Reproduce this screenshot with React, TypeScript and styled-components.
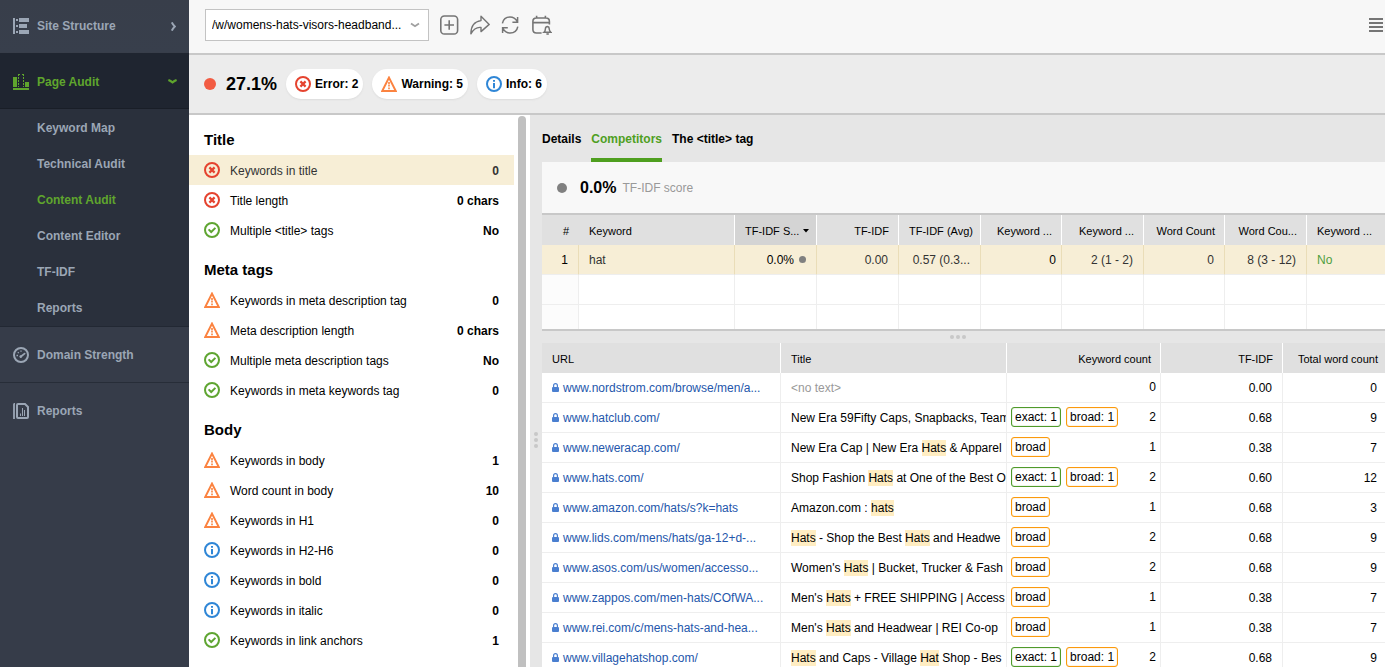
import React from "react";
import styled, { createGlobalStyle } from "styled-components";

const GlobalStyle = createGlobalStyle`
  *, *::before, *::after { box-sizing: border-box; }
  body { margin: 0; background: #fff; }
  body, button, select {
    font-family: "Liberation Sans", Arial, sans-serif;
    font-size: 12px;
    color: #000;
  }
  button { border: 0; padding: 0; background: none; cursor: pointer; }
  ul { list-style: none; margin: 0; padding: 0; }
  h2 { margin: 0; }
  a { color: inherit; text-decoration: none; }
  svg { display: block; flex: none; }
`;

/* ---------- shell ---------- */

const Shell = styled.div`
  display: flex;
  height: 100vh;
  overflow: hidden;
`;

const Main = styled.main`
  flex: 1;
  min-width: 0;
  display: flex;
  flex-direction: column;
`;

const Workspace = styled.div`
  flex: 1;
  min-height: 0;
  display: flex;
`;

/* ---------- sidebar ---------- */

const Sidebar = styled.nav`
  flex: none;
  width: 189px;
  background: #363c49;
  color: #9ba6b5;
  font-weight: bold;
`;

const NavItem = styled.a<{ $active?: boolean; $divider?: boolean }>`
  display: flex;
  align-items: center;
  gap: 8px;
  height: 56px;
  padding: ${(p) => (p.$active ? 2 : 0)}px 12px 0 13px;
  color: ${(p) => (p.$active ? "#5fa52d" : "inherit")};
  background: ${(p) => (p.$active ? "#1f2530" : "transparent")};
  border-bottom: 1px solid ${(p) => (p.$active ? "#191e27" : p.$divider ? "#272d38" : "transparent")};
`;

const FirstNavItem = styled(NavItem)`
  height: 53px;
  padding-right: 13px;
  background: linear-gradient(#383e4a, #383f4c);
`;

const NavLabel = styled.span`
  flex: 1;
`;

const SubMenu = styled.ul`
  padding: 1px 0 0;
  background: #2a303c;
  border-bottom: 1px solid #222833;
`;

const SubItem = styled.a<{ $active?: boolean }>`
  display: flex;
  align-items: center;
  height: 36px;
  padding-left: 37px;
  color: ${(p) => (p.$active ? "#5fa52d" : "inherit")};
`;

/* ---------- top bars ---------- */

const Toolbar = styled.header`
  display: flex;
  align-items: center;
  height: 55px;
  padding: 0 2px 4px 16px;
  background: #f7f7f7;
  border-bottom: 2px solid #c8c8c8;
`;

const SelectBox = styled.label`
  display: grid;
  align-items: center;
  width: 224px;
  margin-right: 10px;
  & > * { grid-area: 1 / 1; }
  & > svg { justify-self: end; margin-right: 9px; pointer-events: none; }
`;

const PageSelect = styled.select`
  appearance: none;
  width: 100%;
  height: 32px;
  padding: 0 20px 0 6px;
  border: 1px solid #c3c3c3;
  border-radius: 0;
  background: #fff;
`;

const ToolGroup = styled.div`
  display: flex;
  gap: 11px;
`;

const ToolButton = styled.button`
  display: block;
  color: #757575;
`;

const MenuButton = styled(ToolButton)`
  margin-left: auto;
`;

const ScoreBar = styled.section`
  display: flex;
  align-items: center;
  height: 60px;
  padding: 0 15px;
  background: #ececec;
  border-bottom: 2px solid #c8c8c8;
`;

const Dot = styled.span<{ $size: number; $color: string }>`
  display: inline-block;
  flex: none;
  width: ${(p) => p.$size}px;
  height: ${(p) => p.$size}px;
  border-radius: 50%;
  background: ${(p) => p.$color};
`;

const TotalScore = styled.strong`
  margin: 0 9px 0 10px;
  font-size: 18px;
`;

const PillGroup = styled.div`
  display: flex;
  gap: 9px;
`;

const Pill = styled.button`
  display: flex;
  align-items: center;
  gap: 4px;
  height: 30px;
  padding: 0 5px 0 9px;
  border-radius: 15px;
  background: #fff;
  box-shadow: 0 1px 2px #dcdcdc;
  font-weight: bold;
`;

/* ---------- factor list ---------- */

const FactorPane = styled.aside`
  flex: none;
  display: flex;
  width: 341px;
  background: #fff;
`;

const FactorList = styled.div`
  flex: 1;
`;

const ScrollThumb = styled.div`
  width: 8px;
  margin: 1px 4px 0;
  border-radius: 4px 4px 0 0;
  background: #c0c0c0;
`;

const GroupTitle = styled.h2`
  height: 40px;
  padding: 10px 15px 0;
  font-size: 15px;
  line-height: 30px;
`;

const FactorRow = styled.button<{ $selected?: boolean }>`
  display: flex;
  align-items: center;
  gap: 10px;
  width: 100%;
  height: 30px;
  padding: 0 15px;
  text-align: left;
  color: ${(p) => (p.$selected ? "#333" : "#000")};
  background: ${(p) => (p.$selected ? "#f7eed6" : "transparent")};
`;

const FactorName = styled.span`
  flex: 1;
  padding-top: 2px;
`;

const FactorValue = styled.strong`
  padding-top: 2px;
`;

/* ---------- detail pane ---------- */

const Detail = styled.section`
  flex: 1;
  min-width: 0;
  display: flex;
  background: #e6e6e6;
`;

const VSplitter = styled.div`
  flex: none;
  display: flex;
  flex-direction: column;
  align-items: center;
  gap: 2px;
  width: 12px;
  padding-top: 317px;
`;

const HSplitter = styled.div`
  display: flex;
  align-items: center;
  justify-content: center;
  gap: 2px;
  height: 12px;
  padding-right: 12px;
`;

const DetailBody = styled.div`
  flex: 1;
  min-width: 0;
`;

const Tabs = styled.div`
  display: flex;
  gap: 10px;
  height: 47px;
`;

const Tab = styled.button<{ $active?: boolean }>`
  padding-top: 4px;
  font-weight: bold;
  color: ${(p) => (p.$active ? "#4f9f1f" : "#000")};
  border-bottom: 4px solid ${(p) => (p.$active ? "#4f9f1f" : "transparent")};
`;

const ScoreHead = styled.div`
  display: flex;
  align-items: center;
  height: 53px;
  padding: 0 15px;
  background: #f8f8f8;
  border-bottom: 2px solid #c8c8c8;
`;

const TfScore = styled.strong`
  margin: 0 6px 0 13px;
  font-size: 16px;
`;

const Muted = styled.span`
  color: #999;
`;

const Grid = styled.table`
  width: 100%;
  table-layout: fixed;
  border-collapse: separate;
  border-spacing: 0;
  background: #fff;
`;

const KeywordGrid = styled(Grid)`
  border-bottom: 2px solid #c8c8c8;
`;

type CellProps = { $align?: "left" | "right"; $pad?: number; $plain?: boolean; $sorted?: boolean };

const Th = styled.th<CellProps>`
  height: 30px;
  padding: 2px ${(p) => p.$pad ?? 9}px 0 10px;
  overflow: hidden;
  white-space: nowrap;
  font-size: 11px;
  font-weight: normal;
  text-align: ${(p) => p.$align ?? "right"};
  background: ${(p) => (p.$sorted ? "#d4d4d4" : "#e0e0e0")};
  border-right: 1px solid ${(p) => (p.$plain ? "#e0e0e0" : "#fff")};
  &:last-child { border-right: 0; }
`;

const Td = styled.td<CellProps>`
  height: 30px;
  padding: 0 ${(p) => p.$pad ?? 10}px 0 10px;
  overflow: hidden;
  white-space: nowrap;
  text-align: ${(p) => p.$align ?? "right"};
  border-right: 1px solid #eee;
  border-bottom: 1px solid #eee;
  &:last-child { border-right: 0; }
`;

const CountTd = styled(Td)`
  padding: 0 4px 1px;
`;

const KeywordRow = styled.tr<{ $selected?: boolean; $last?: boolean }>`
  & > td {
    height: ${(p) => (p.$last ? 24 : 30)}px;
    color: ${(p) => (p.$selected ? "#333" : "#000")};
    background: ${(p) => (p.$selected ? "#f7eed6" : "#fff")};
    border-right-color: ${(p) => (p.$selected ? "#eaddb8" : "#eee")};
    border-bottom-width: ${(p) => (p.$last ? 0 : 1)}px;
  }
  & > td:first-child { background: ${(p) => (p.$selected ? "#f7eed6" : "#fcfcfc")}; }
`;

const SortCell = styled.span`
  display: inline-flex;
  align-items: center;
  gap: 4px;
`;

const ValueCell = styled(SortCell)`
  gap: 5px;
`;

const Strong = styled.span`
  color: #000;
`;

const Positive = styled.span`
  color: #4f9f3f;
`;

const SiteLink = styled.a`
  display: flex;
  align-items: center;
  gap: 4px;
  color: #2456ab;
`;

const Mark = styled.mark`
  padding: 1px 0;
  color: inherit;
  background: #ffedc2;
`;

const CountCell = styled.div`
  display: flex;
  align-items: center;
  gap: 5px;
`;

const Tag = styled.span<{ $kind: "exact" | "broad" }>`
  height: 20px;
  padding: 0 3px;
  line-height: 18px;
  border: 1px solid ${(p) => (p.$kind === "exact" ? "#4f9a2a" : "#fb9a0c")};
  border-radius: 3px;
  box-shadow: inset 0 0 1px ${(p) => (p.$kind === "exact" ? "#4f9a2a" : "#fb9a0c")};
`;

const Count = styled.span`
  margin-left: auto;
`;

/* ---------- icons ---------- */

const StructureIcon = () => (
  <svg width="16" height="16" fill="currentColor">
    <path d="M0 0h2v16H0zM3 1h2v2H3zM3 7h2v2H3zM3 13h2v2H3zM6 0h10v4H6zM6 6h8v4H6zM6 12h10v4H6z" />
  </svg>
);

const AuditIcon = () => (
  <svg width="16" height="16" fill="currentColor">
    <path d="M0 3h4v10H0zM12 8h4v5h-4zM0 14h16v2H0z" />
    <path d="M5 0h2v1H6v1H5zM9 0h2v2h-1V1H9zM5 3h1v2H5zM5 6h1v2H5zM5 9h1v2H5zM5 12h1v1H5zM10 3h1v2h-1zM10 6h1v2h-1zM10 9h1v2h-1zM10 12h1v1h-1z" />
  </svg>
);

const GaugeIcon = () => (
  <svg width="16" height="16" fill="none" stroke="currentColor">
    <circle cx="8" cy="8" r="7" strokeWidth="2" />
    <path d="M7.6 9.8L11.6 6.6" strokeWidth="1.8" strokeLinecap="round" />
    <circle cx="7.8" cy="9.6" r="1.3" fill="currentColor" stroke="none" />
    <path d="M3.5 8.5h1.5M4.8 5.2l.9.9M8 3.4v1.4" strokeWidth="1.3" />
  </svg>
);

const ReportIcon = () => (
  <svg width="16" height="16" fill="none" stroke="currentColor">
    <path d="M1 16V1.5Q1 .8 2 .8" strokeWidth="1.8" />
    <path d="M5 1h7l3 3v10q0 1-1 1H5q-1 0-1-1V2q0-1 1-1z" strokeWidth="2" />
    <path d="M7.5 13v-2.5M9.5 13V5M11.5 13V7" />
  </svg>
);

const ChevronRight = () => (
  <svg width="5" height="9" fill="none" stroke="currentColor" strokeWidth="2">
    <path d="M.8.4Q2 2.8 3.8 4.5Q2 6.2.8 8.6" />
  </svg>
);

const ChevronDown = () => (
  <svg width="9" height="5" fill="none" stroke="currentColor" strokeWidth="2.2">
    <path d="M.4 1Q2.6 1.8 4.5 3.4Q6.4 1.8 8.6 1" />
  </svg>
);

const SelectChevron = () => (
  <svg width="10" height="6" fill="none" stroke="#a0a0a0" strokeWidth="1.8">
    <path d="M1 1.4L5 4.2L9 1.4" />
  </svg>
);

const line = { width: 20, height: 20, fill: "none", stroke: "currentColor", strokeWidth: 1.6 } as const;

const AddIcon = () => (
  <svg {...line}>
    <rect x="1.8" y="1" width="16.8" height="18" rx="3.6" />
    <path d="M10.2 5.2v9.6M5.4 10h9.6" />
  </svg>
);

const ShareIcon = () => (
  <svg {...line} strokeWidth="1.4" strokeLinejoin="round">
    <path d="M11 1.2L19.2 9.4L11 16.6V12.4C7.4 12 3.6 13.8.9 18.8C.9 11.2 4.8 6.4 11 5.6z" />
  </svg>
);

const RefreshIcon = () => (
  <svg {...line} strokeWidth="1.5">
    <path d="M1.4 8.4C2.2 4.4 5.4 2 9 2C12.2 2 14.6 3.6 16.2 6.4M16.6 2V7.2H11.4" />
    <path d="M16.8 11.6C16 15.6 12.8 18 9.2 18C6 18 3.6 16.4 2 13.6M1.6 18V12.8H6.8" />
  </svg>
);

const ScheduleIcon = () => (
  <svg {...line} strokeWidth="1.6">
    <path d="M9.6 18H4.4Q.9 18 .9 14.6V6.4Q.9 3 4.4 3H14Q17.4 3 17.4 6.4V9.4M.9 7.6H17.4M4.6 .8V3.2M13.4 .8V3.2" />
    <path d="M12 17.2Q13.4 16 13.4 13.8Q13.6 11.6 15.4 11.6Q17.4 11.8 17.2 14Q17.4 16 18.8 17.2z" strokeWidth="1.5" />
    <path d="M14.4 19h2.4" strokeWidth="1.6" />
  </svg>
);

const MenuIcon = () => (
  <svg width="14" height="14" fill="currentColor">
    <path d="M0 0h14v2H0zM0 4h14v2H0zM0 8h14v2H0zM0 12h14v2H0z" />
  </svg>
);

type Status = "error" | "warning" | "info" | "ok";

const StatusIcon = ({ status }: { status: Status }) => {
  if (status === "warning")
    return (
      <svg width="16" height="16" fill="none" stroke="#fb8340">
        <path d="M8 1.6L14.8 15H1.2z" strokeWidth="2" />
        <path d="M8 6v2M8 8.6v2M8 11.4v1.8" strokeWidth="1.6" />
      </svg>
    );
  const color = { error: "#e5432f", info: "#2f86d6", ok: "#5fa532" }[status];
  return (
    <svg width="16" height="16" fill="none" stroke={color}>
      <circle cx="8" cy="8" r="7" strokeWidth="2" />
      {status === "error" && <path d="M5.4 5.4l5.2 5.2M10.6 5.4l-5.2 5.2" strokeWidth="2.2" />}
      {status === "info" && <path d="M8 4v1.8M8 7v5.2" strokeWidth="2" />}
      {status === "ok" && <path d="M4.6 7.4L7.2 10L11.4 5.9" strokeWidth="2" />}
    </svg>
  );
};

const SortArrow = () => (
  <svg width="6" height="4">
    <path d="M0 0h6L3 3.6z" />
  </svg>
);

const LockIcon = () => (
  <svg width="7" height="10" fill="none" stroke="#4a7fd0">
    <path d="M1.6 5V2.6Q1.6 .7 3.5 .7T5.4 2.6V5" strokeWidth="1.2" />
    <rect x="0" y="4" width="7" height="5" rx="1" fill="#4a7fd0" stroke="none" />
  </svg>
);

/* ---------- data ---------- */

const subPages = ["Keyword Map", "Technical Audit", "Content Audit", "Content Editor", "TF-IDF", "Reports"];

const groups: { title: string; rows: [Status, string, string][] }[] = [
  {
    title: "Title",
    rows: [
      ["error", "Keywords in title", "0"],
      ["error", "Title length", "0 chars"],
      ["ok", "Multiple <title> tags", "No"],
    ],
  },
  {
    title: "Meta tags",
    rows: [
      ["warning", "Keywords in meta description tag", "0"],
      ["warning", "Meta description length", "0 chars"],
      ["ok", "Multiple meta description tags", "No"],
      ["ok", "Keywords in meta keywords tag", "0"],
    ],
  },
  {
    title: "Body",
    rows: [
      ["warning", "Keywords in body", "1"],
      ["warning", "Word count in body", "10"],
      ["warning", "Keywords in H1", "0"],
      ["info", "Keywords in H2-H6", "0"],
      ["info", "Keywords in bold", "0"],
      ["info", "Keywords in italic", "0"],
      ["ok", "Keywords in link anchors", "1"],
    ],
  },
];

const keywordCols = [37, 0, 82, 82, 82, 81, 82, 81, 82, 78];
const siteCols = [239, 0, 154, 122, 102];

type Site = { url: string; title: string; tags: string[]; count: number; tfidf: string; words: number };

const sites: Site[] = [
  { url: "www.nordstrom.com/browse/men/a...", title: "", tags: [], count: 0, tfidf: "0.00", words: 0 },
  { url: "www.hatclub.com/", title: "New Era 59Fifty Caps, Snapbacks, Team", tags: ["exact: 1", "broad: 1"], count: 2, tfidf: "0.68", words: 9 },
  { url: "www.neweracap.com/", title: "New Era Cap | New Era *Hats* & Apparel", tags: ["broad"], count: 1, tfidf: "0.38", words: 7 },
  { url: "www.hats.com/", title: "Shop Fashion *Hats* at One of the Best O", tags: ["exact: 1", "broad: 1"], count: 2, tfidf: "0.60", words: 12 },
  { url: "www.amazon.com/hats/s?k=hats", title: "Amazon.com : *hats*", tags: ["broad"], count: 1, tfidf: "0.68", words: 3 },
  { url: "www.lids.com/mens/hats/ga-12+d-...", title: "*Hats* - Shop the Best *Hats* and Headwe", tags: ["broad"], count: 2, tfidf: "0.68", words: 9 },
  { url: "www.asos.com/us/women/accesso...", title: "Women's *Hats* | Bucket, Trucker & Fash", tags: ["broad"], count: 2, tfidf: "0.68", words: 9 },
  { url: "www.zappos.com/men-hats/COfWA...", title: "Men's *Hats* + FREE SHIPPING | Access", tags: ["broad"], count: 1, tfidf: "0.38", words: 7 },
  { url: "www.rei.com/c/mens-hats-and-hea...", title: "Men's *Hats* and Headwear | REI Co-op", tags: ["broad"], count: 1, tfidf: "0.38", words: 7 },
  { url: "www.villagehatshop.com/", title: "*Hats* and Caps - Village *Hat* Shop - Bes", tags: ["exact: 1", "broad: 1"], count: 2, tfidf: "0.68", words: 9 },
];

const Highlighted = ({ text }: { text: string }) => (
  <>{text.split("*").map((part, i) => (i % 2 ? <Mark key={i}>{part}</Mark> : part))}</>
);

const Columns = ({ widths }: { widths: number[] }) => (
  <colgroup>
    {widths.map((w, i) => (
      <col key={i} width={w || undefined} />
    ))}
  </colgroup>
);

const Grip = () => (
  <>
    <Dot $size={4} $color="#c8c8c8" />
    <Dot $size={4} $color="#c8c8c8" />
    <Dot $size={4} $color="#c8c8c8" />
  </>
);

/* ---------- page ---------- */

export default function App() {
  return (
    <>
      <GlobalStyle />
      <Shell>
        <Sidebar>
          <FirstNavItem href="#structure">
            <StructureIcon />
            <NavLabel>Site Structure</NavLabel>
            <ChevronRight />
          </FirstNavItem>
          <NavItem href="#audit" $active>
            <AuditIcon />
            <NavLabel>Page Audit</NavLabel>
            <ChevronDown />
          </NavItem>
          <SubMenu>
            {subPages.map((name) => (
              <li key={name}>
                <SubItem href="#audit" $active={name === "Content Audit"}>{name}</SubItem>
              </li>
            ))}
          </SubMenu>
          <NavItem href="#domain" $divider>
            <GaugeIcon />
            <NavLabel>Domain Strength</NavLabel>
          </NavItem>
          <NavItem href="#reports">
            <ReportIcon />
            <NavLabel>Reports</NavLabel>
          </NavItem>
        </Sidebar>

        <Main>
          <Toolbar>
            <SelectBox>
              <PageSelect aria-label="Page">
                <option>/w/womens-hats-visors-headband...</option>
              </PageSelect>
              <SelectChevron />
            </SelectBox>
            <ToolGroup>
              <ToolButton aria-label="Add"><AddIcon /></ToolButton>
              <ToolButton aria-label="Share"><ShareIcon /></ToolButton>
              <ToolButton aria-label="Refresh"><RefreshIcon /></ToolButton>
              <ToolButton aria-label="Schedule"><ScheduleIcon /></ToolButton>
            </ToolGroup>
            <MenuButton aria-label="Menu"><MenuIcon /></MenuButton>
          </Toolbar>

          <ScoreBar>
            <Dot $size={12} $color="#f25c43" />
            <TotalScore>27.1%</TotalScore>
            <PillGroup>
              <Pill><StatusIcon status="error" />Error: 2</Pill>
              <Pill><StatusIcon status="warning" />Warning: 5</Pill>
              <Pill><StatusIcon status="info" />Info: 6</Pill>
            </PillGroup>
          </ScoreBar>

          <Workspace>
            <FactorPane>
              <FactorList>
                {groups.map((group, g) => (
                  <section key={group.title}>
                    <GroupTitle>{group.title}</GroupTitle>
                    <ul>
                      {group.rows.map(([status, name, value], r) => (
                        <li key={name}>
                          <FactorRow $selected={g === 0 && r === 0}>
                            <StatusIcon status={status} />
                            <FactorName>{name}</FactorName>
                            <FactorValue>{value}</FactorValue>
                          </FactorRow>
                        </li>
                      ))}
                    </ul>
                  </section>
                ))}
              </FactorList>
              <ScrollThumb />
            </FactorPane>

            <Detail>
              <VSplitter><Grip /></VSplitter>
              <DetailBody>
                <Tabs role="tablist">
                  <Tab role="tab">Details</Tab>
                  <Tab role="tab" aria-selected $active>Competitors</Tab>
                  <Tab role="tab">The &lt;title&gt; tag</Tab>
                </Tabs>
                <ScoreHead>
                  <Dot $size={10} $color="#808080" />
                  <TfScore>0.0%</TfScore>
                  <Muted>TF-IDF score</Muted>
                </ScoreHead>

                <KeywordGrid>
                  <Columns widths={keywordCols} />
                  <thead>
                    <tr>
                      <Th $plain>#</Th>
                      <Th $align="left">Keyword</Th>
                      <Th $sorted><SortCell>TF-IDF S...<SortArrow /></SortCell></Th>
                      <Th>TF-IDF</Th>
                      <Th>TF-IDF (Avg)</Th>
                      <Th>Keyword ...</Th>
                      <Th>Keyword ...</Th>
                      <Th>Word Count</Th>
                      <Th>Word Cou...</Th>
                      <Th $align="left">Keyword ...</Th>
                    </tr>
                  </thead>
                  <tbody>
                    <KeywordRow $selected>
                      <Td><Strong>1</Strong></Td>
                      <Td $align="left">hat</Td>
                      <Td><ValueCell><Strong>0.0%</Strong><Dot $size={7} $color="#808080" /></ValueCell></Td>
                      <Td>0.00</Td>
                      <Td>0.57 (0.3...</Td>
                      <Td $pad={5}><Strong>0</Strong></Td>
                      <Td>2 (1 - 2)</Td>
                      <Td>0</Td>
                      <Td>8 (3 - 12)</Td>
                      <Td $align="left"><Positive>No</Positive></Td>
                    </KeywordRow>
                    <KeywordRow>{keywordCols.map((_, i) => <Td key={i} />)}</KeywordRow>
                    <KeywordRow $last>{keywordCols.map((_, i) => <Td key={i} />)}</KeywordRow>
                  </tbody>
                </KeywordGrid>

                <HSplitter><Grip /></HSplitter>

                <Grid>
                  <Columns widths={siteCols} />
                  <thead>
                    <tr>
                      <Th $align="left">URL</Th>
                      <Th $align="left">Title</Th>
                      <Th>Keyword count</Th>
                      <Th>TF-IDF</Th>
                      <Th $pad={7}>Total word count</Th>
                    </tr>
                  </thead>
                  <tbody>
                    {sites.map((site) => (
                      <tr key={site.url}>
                        <Td $align="left"><SiteLink href="#site"><LockIcon />{site.url}</SiteLink></Td>
                        <Td $align="left" $pad={0}>
                          {site.title ? <Highlighted text={site.title} /> : <Muted>&lt;no text&gt;</Muted>}
                        </Td>
                        <CountTd>
                          <CountCell>
                            {site.tags.map((tag) => (
                              <Tag key={tag} $kind={tag.startsWith("exact") ? "exact" : "broad"}>{tag}</Tag>
                            ))}
                            <Count>{site.count}</Count>
                          </CountCell>
                        </CountTd>
                        <Td>{site.tfidf}</Td>
                        <Td $pad={8}>{site.words}</Td>
                      </tr>
                    ))}
                  </tbody>
                </Grid>
              </DetailBody>
            </Detail>
          </Workspace>
        </Main>
      </Shell>
    </>
  );
}
